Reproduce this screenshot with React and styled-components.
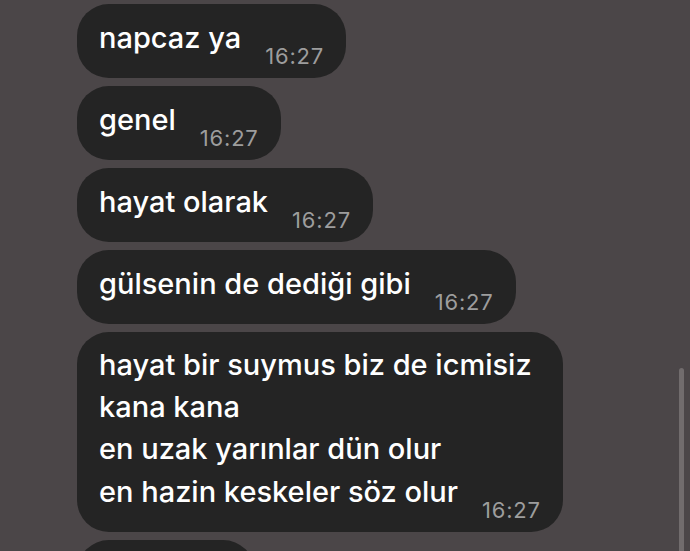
import React from "react";
import styled, { createGlobalStyle } from "styled-components";

const Global = createGlobalStyle`
  html, body { margin: 0; padding: 0; background: #4b4648; overflow: hidden; }
  body { font-family: Inter, "Liberation Sans", Arial, sans-serif; }
`;

const Screen = styled.div`
  width: 690px;
  height: 551px;
  overflow: hidden;
  position: relative;
  background: #4b4648;
`;

const List = styled.div`
  display: flex;
  flex-direction: column;
  align-items: flex-start;
  gap: 8px;
  padding: 4px 0 0 77px;
`;

const Bubble = styled.div`
  display: inline-flex;
  flex-direction: column;
  box-sizing: border-box;
  background: #242424;
  border-radius: 32px;
  padding: 12px 22px 11px 22px;
  color: #ffffff;
  min-width: ${(p) => (p.$w ? `${p.$w}px` : "0")};
  min-height: ${(p) => (p.$w ? "74px" : "0")};
`;

const Line = styled.div`
  font-family: Inter, "Liberation Sans", Arial, sans-serif;
  font-size: 29px;
  font-weight: 500;
  line-height: 42px;
  white-space: nowrap;
`;

const LastRow = styled.div`
  display: flex;
  align-items: flex-end;
  gap: 24px;
  justify-content: space-between;
`;

const LastLine = styled(Line)`
  line-height: 43px;
  padding-bottom: 8px;
`;

const Time = styled.span`
  font-family: Inter, "Liberation Sans", Arial, sans-serif;
  font-size: 22px;
  line-height: 22px;
  font-weight: 400;
  letter-spacing: 0.8px;
  color: #9d9d9d;
  white-space: nowrap;
`;

const ScrollThumb = styled.div`
  position: absolute;
  right: 6px;
  top: 368px;
  width: 5px;
  height: 200px;
  border-radius: 3px;
  background: #716c6d;
`;

const messages = [
  ["napcaz ya"],
  ["genel"],
  ["hayat olarak"],
  ["gülsenin de dediği gibi"],
  [
    "hayat bir suymus biz de icmisiz",
    "kana kana",
    "en uzak yarınlar dün olur",
    "en hazin keskeler söz olur",
  ],
];

function Message({ lines, time }) {
  const head = lines.slice(0, -1);
  const last = lines[lines.length - 1];
  return (
    <Bubble>
      {head.map((l, i) => (
        <Line key={i}>{l}</Line>
      ))}
      <LastRow>
        <LastLine>{last}</LastLine>
        <Time>{time}</Time>
      </LastRow>
    </Bubble>
  );
}

export default function App() {
  return (
    <Screen>
      <Global />
      <List>
        {messages.map((m, i) => (
          <Message key={i} lines={m} time="16:27" />
        ))}
        <Bubble $w={178} />
      </List>
      <ScrollThumb />
    </Screen>
  );
}
